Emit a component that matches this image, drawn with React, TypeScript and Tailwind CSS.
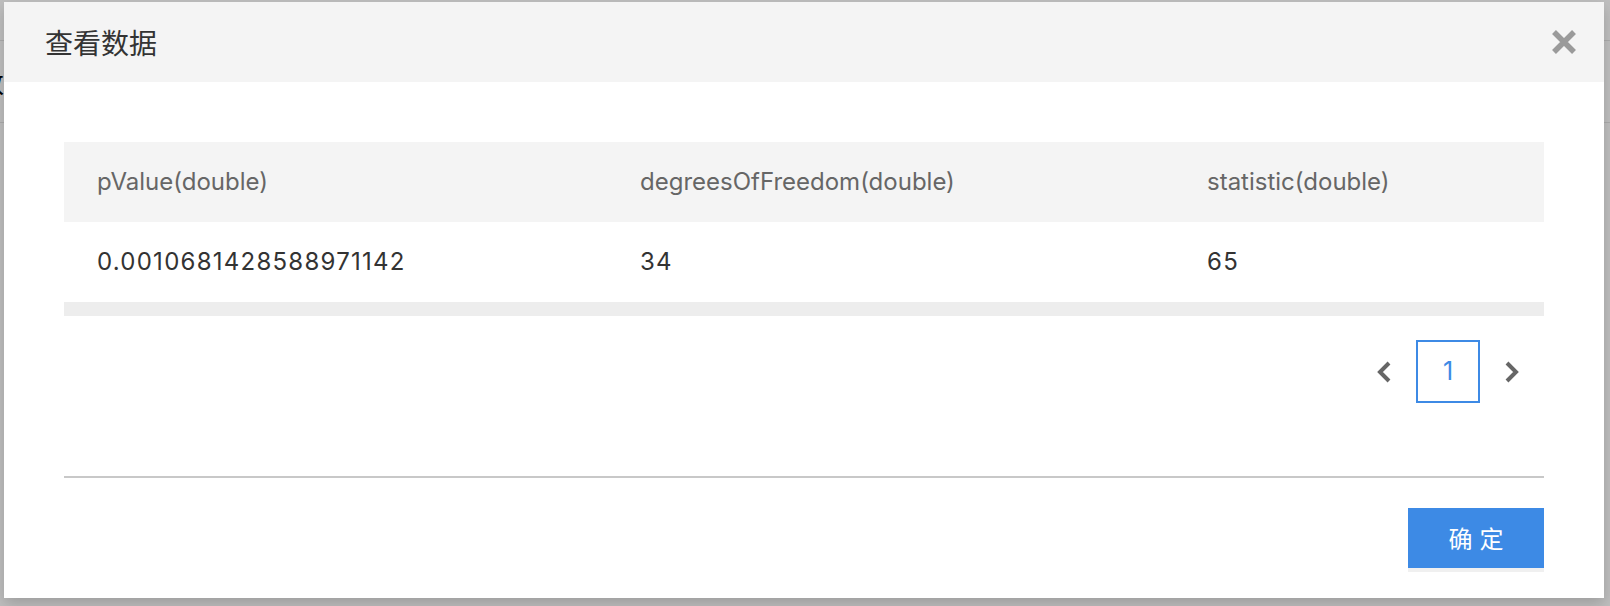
const columns = ["pValue(double)", "degreesOfFreedom(double)", "statistic(double)"]
const rows = [["0.0010681428588971142", "34", "65"]]

const latin = "font-['Inter','Noto_Sans_CJK_SC',sans-serif]"

function CloseIcon() {
  return (
    <svg width="24" height="24" viewBox="0 0 24 24" className="block">
      <path d="M2 2 L22 22 M22 2 L2 22" stroke="#9a9a9a" strokeWidth="5.5" fill="none" />
    </svg>
  )
}

function Chevron({ dir }: { dir: "left" | "right" }) {
  return (
    <svg width="14" height="22" viewBox="0 0 14 22" className="block">
      <polyline
        points={dir === "left" ? "12,2 3,11 12,20" : "2,2 11,11 2,20"}
        stroke="#666666"
        strokeWidth="4"
        fill="none"
      />
    </svg>
  )
}

function DataTable() {
  return (
    <div className="w-full">
      <div className="flex h-[80px] items-center bg-[#f4f4f4] text-[24px] text-[#666666]">
        <div className="w-[543px] pl-[33px]">{columns[0]}</div>
        <div className="w-[567px] pl-[33px]">{columns[1]}</div>
        <div className="flex-1 pl-[33px]">{columns[2]}</div>
      </div>
      {rows.map((row, i) => (
        <div key={i} className="flex h-[80px] items-center bg-white text-[24px] tracking-[1.25px] text-[#333333]">
          <div className="w-[543px] pl-[33px]">{row[0]}</div>
          <div className="w-[567px] pl-[33px]">{row[1]}</div>
          <div className="flex-1 pl-[33px]">{row[2]}</div>
        </div>
      ))}
      <div className="h-[14px] bg-[#ededed]" />
    </div>
  )
}

function Pagination() {
  return (
    <div className="mt-[24px] flex justify-end">
      <button className="flex h-[63px] w-[64px] items-center justify-center">
        <Chevron dir="left" />
      </button>
      <button className="flex h-[63px] w-[64px] items-center justify-center border-2 border-[#3d8ae5] text-[25px] text-[#3d8ae5]">
        1
      </button>
      <button className="flex h-[63px] w-[64px] items-center justify-center">
        <Chevron dir="right" />
      </button>
    </div>
  )
}

export default function App() {
  return (
    <div className={cn("relative h-[606px] w-[1610px] overflow-hidden bg-white", latin)}>
      {/* page behind the dialog */}
      <div className="h-[41px] border-b border-[#e6e6e6]" />
      <div className="flex h-[82px] items-center border-b border-[#e6e6e6] text-[26px] text-black">
        <span className="-ml-[22px] font-['Noto_Sans_CJK_SC',sans-serif]">数</span>
      </div>

      <div className="absolute inset-0 bg-black/25" />

      <div className="absolute left-[4px] top-[2px] flex h-[596px] w-[1600px] flex-col bg-white shadow-[0_6px_14px_rgba(0,0,0,0.18)]">
        <div className="flex h-[80px] items-center justify-between bg-[#f4f4f4] pl-[41px] pr-[28px]">
          <h2 className="font-['Noto_Sans_CJK_SC',sans-serif] text-[28px] font-normal text-[#333333]">查看数据</h2>
          <button>
            <CloseIcon />
          </button>
        </div>

        <div className="px-[60px] pt-[60px]">
          <DataTable />
          <Pagination />
          <div className="mt-[73px] h-[2px] bg-[#c8c8c8]" />
          <div className="mt-[30px] flex justify-end">
            <button className="h-[60px] w-[136px] bg-[#3d8ae5] pl-[7px] font-['Noto_Sans_CJK_SC',sans-serif] text-[24px] tracking-[7px] text-white shadow-[0_4px_0_#f0f0f0]">
              确定
            </button>
          </div>
        </div>
      </div>
    </div>
  )
}

function cn(...classes: (string | false | undefined)[]) {
  return classes.filter(Boolean).join(" ")
}
